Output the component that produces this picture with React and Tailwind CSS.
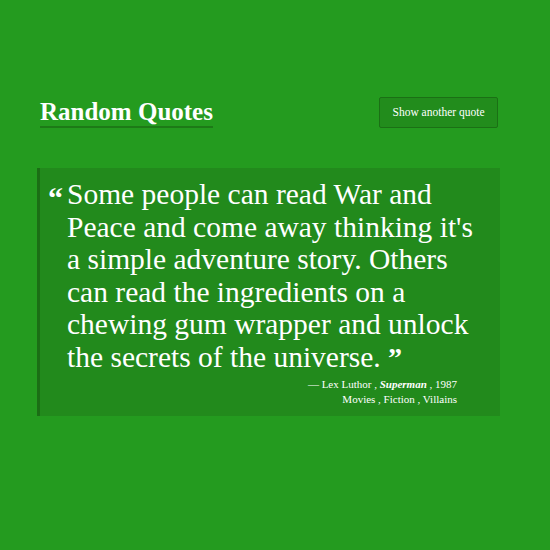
import React from "react";

const quote = {
	text: "Some people can read War and Peace and come away thinking it's a simple adventure story. Others can read the ingredients on a chewing gum wrapper and unlock the secrets of the universe.",
	author: "Lex Luthor",
	source: "Superman",
	year: "1987",
	tags: ["Movies", "Fiction", "Villains"],
};

const App = () => {
	return (
		<div
			className="min-h-[550px] w-[550px] bg-[#249b1f] text-white"
			style={{ fontFamily: '"Liberation Serif", "DejaVu Serif", serif' }}
		>
			<div className="pt-[97px] pl-[40px] pr-[52px]">
				<div className="flex items-center justify-between">
					<h1 className="text-[25px] font-bold leading-[29px] border-b-2 border-[#1d7a17]">
						Random Quotes
					</h1>
					<button className="h-[31px] w-[119px] text-[11.5px] bg-[#228c1c] border border-[#1b7015] rounded-[2px] text-white">
						Show another quote
					</button>
				</div>
			</div>
			<div className="mt-[40px] ml-[37px] w-[463px] bg-[#228a1c] border-l-[3px] border-[#1b6e15] pt-[10px] pb-[9px] pl-[8px] pr-[20px]">
				<div className="flex">
					<span className="w-[19px] shrink-0 text-[30px] font-bold leading-[32px] pt-[4px]">“</span>
					<p className="text-[29.5px] leading-[32.5px]">
						{quote.text} <span className="text-[28px] font-bold leading-none">”</span>
					</p>
				</div>
				<div className="mt-[4px] pr-[23px] text-right text-[11px] leading-[15px]">
					<div>
						— {quote.author} , <em className="font-bold">{quote.source}</em> , {quote.year}
					</div>
					<div>{quote.tags.join(" , ")}</div>
				</div>
			</div>
		</div>
	);
};

export default App;
